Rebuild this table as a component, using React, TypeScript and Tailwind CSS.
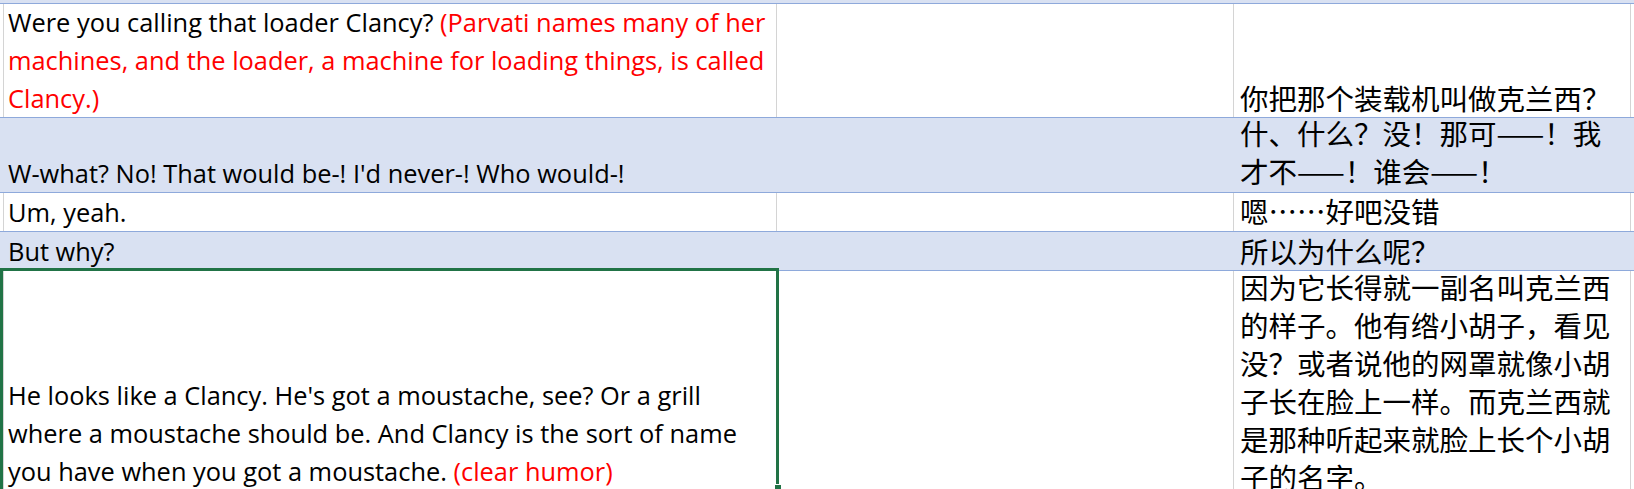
import type { ReactNode } from 'react';

type Row = {
  band: boolean;
  height: string;
  enPad: string;
  zhPad: string;
  en: ReactNode[];
  zh: string[];
};

const Red = ({ children }: { children: ReactNode }) => (
  <span className="text-[#ff0000]">{children}</span>
);

const rows: Row[] = [
  {
    band: false,
    height: 'h-[114px]',
    enPad: 'pb-0',
    zhPad: 'pb-0',
    en: [
      <>Were you calling that loader Clancy? <Red>(Parvati names many of her</Red></>,
      <Red>machines, and the loader, a machine for loading things, is called</Red>,
      <Red>Clancy.)</Red>,
    ],
    zh: ['你把那个装载机叫做克兰西？'],
  },
  {
    band: true,
    height: 'h-[75px]',
    enPad: 'pb-0',
    zhPad: 'pb-[2px]',
    en: ["W-what? No! That would be-! I'd never-! Who would-!"],
    zh: ['什、什么？没！那可——！我', '才不——！谁会——！'],
  },
  {
    band: false,
    height: 'h-[39px]',
    enPad: 'pb-0',
    zhPad: 'pb-[1px]',
    en: ['Um, yeah.'],
    zh: ['嗯……好吧没错'],
  },
  {
    band: true,
    height: 'h-[39px]',
    enPad: 'pb-0',
    zhPad: 'pb-0',
    en: ['But why?'],
    zh: ['所以为什么呢？'],
  },
  {
    band: false,
    height: 'h-[230px]',
    enPad: 'pb-[10px]',
    zhPad: 'pb-[4px]',
    en: [
      "He looks like a Clancy. He's got a moustache, see? Or a grill",
      'where a moustache should be. And Clancy is the sort of name',
      <>you have when you got a moustache. <Red>(clear humor)</Red></>,
    ],
    zh: [
      '因为它长得就一副名叫克兰西',
      '的样子。他有绺小胡子，看见',
      '没？或者说他的网罩就像小胡',
      '子长在脸上一样。而克兰西就',
      '是那种听起来就脸上长个小胡',
      '子的名字。',
    ],
  },
];

export default function App() {
  return (
    <div className="relative w-[1634px] h-[489px] overflow-hidden bg-white">
      {/* header strip of the table above */}
      <div className="h-[4px] bg-[#d9e1f2] border-b border-[#8ea9db]" />

      {rows.map((row, i) => {
        const line = row.band ? 'border-[#d9e1f2]' : 'border-[#d4d4d4]';
        return (
          <div
            key={i}
            className={`flex ${row.height} border-b border-[#8ea9db] ${row.band ? 'bg-[#d9e1f2]' : 'bg-white'}`}
          >
            <div className={`w-[4px] shrink-0 border-r ${line}`} />
            <div
              className={`w-[773px] shrink-0 border-r ${line} flex flex-col justify-end pl-[4px] ${row.enPad} overflow-hidden font-['Open_Sans',sans-serif] text-[25.4px] leading-[38px] text-black whitespace-nowrap`}
            >
              {row.en.map((t, j) => (
                <div key={j} className="shrink-0">{t}</div>
              ))}
            </div>
            <div className={`w-[457px] shrink-0 border-r ${line}`} />
            <div
              className={`w-[397px] shrink-0 border-r ${line} flex flex-col justify-end pl-[6px] ${row.zhPad} overflow-hidden font-['Noto_Sans_CJK_SC',sans-serif] text-[28.5px] leading-[38px] text-black whitespace-nowrap`}
            >
              {row.zh.map((t, j) => (
                <div key={j} className="shrink-0">{t}</div>
              ))}
            </div>
            <div className="flex-1" />
          </div>
        );
      })}

      {/* active cell selection */}
      <div className="absolute left-0 top-[268px] w-[779px] h-[224px] border-[3px] border-[#217346] pointer-events-none" />
      <div className="absolute left-[774px] top-[484px] w-[8px] h-[8px] bg-[#217346] border border-white" />
    </div>
  );
}
